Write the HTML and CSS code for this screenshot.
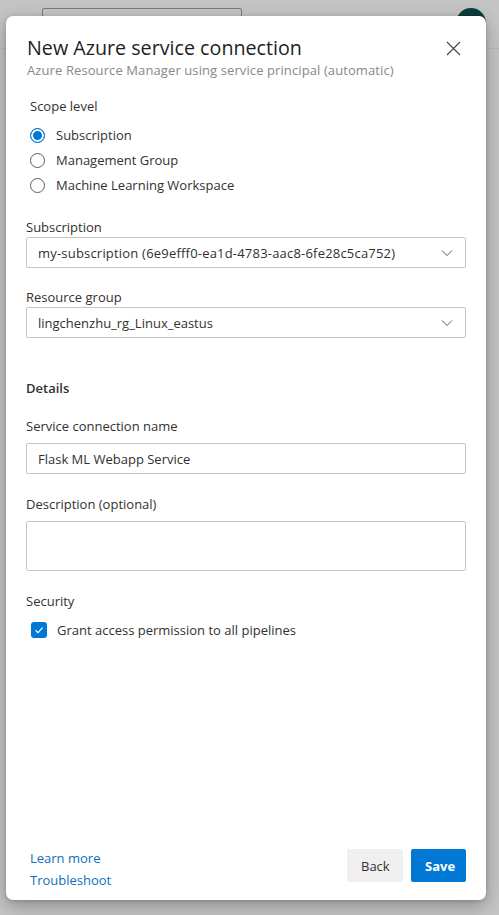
FILE: index.html
```html
<!DOCTYPE html>
<html>
<head>
<meta charset="utf-8">
<link rel="stylesheet" href="styles.css">
</head>
<body>
<div class="page">
  <div class="bg-search"></div>
  <div class="bg-avatar"></div>
  <div class="bg-line bg-line-top"></div>
  <div class="dialog">
    <div class="header">
      <div class="titles">
        <div class="title">New Azure service connection</div>
        <div class="subtitle">Azure Resource Manager using service principal (automatic)</div>
      </div>
      <button class="close" aria-label="Close">
        <svg width="15" height="15" viewBox="0 0 15 15"><path d="M1 1L14 14M14 1L1 14" stroke="#444" stroke-width="1.1" fill="none"/></svg>
      </button>
    </div>
    <div class="body">
      <div class="scope-label">Scope level</div>
      <div class="radios">
        <label class="radio checked"><span class="dot"></span><span>Subscription</span></label>
        <label class="radio"><span class="dot"></span><span>Management Group</span></label>
        <label class="radio"><span class="dot"></span><span>Machine Learning Workspace</span></label>
      </div>

      <div class="field f-sub">
        <div class="label">Subscription</div>
        <div class="select"><span class="wide">my-subscription (6e9efff0-ea1d-4783-aac8-6fe28c5ca752)</span>
          <svg width="12" height="8" viewBox="0 0 12 8"><path d="M1 1.5L6 6.5L11 1.5" stroke="#555" stroke-width="1" fill="none"/></svg></div>
      </div>
      <div class="field f-rg">
        <div class="label">Resource group</div>
        <div class="select"><span>lingchenzhu_rg_Linux_eastus</span>
          <svg width="12" height="8" viewBox="0 0 12 8"><path d="M1 1.5L6 6.5L11 1.5" stroke="#555" stroke-width="1" fill="none"/></svg></div>
      </div>

      <div class="section">Details</div>
      <div class="field f-name">
        <div class="label">Service connection name</div>
        <div class="input">Flask ML Webapp Service</div>
      </div>
      <div class="field f-desc">
        <div class="label">Description (optional)</div>
        <div class="textarea"></div>
      </div>
      <div class="field f-sec">
        <div class="label">Security</div>
        <label class="check"><span class="box"><svg width="12" height="12" viewBox="0 0 12 12"><path d="M2.5 6.2L5 8.6L9.6 3.6" stroke="#fff" stroke-width="1.2" fill="none"/></svg></span><span>Grant access permission to all pipelines</span></label>
      </div>
    </div>
    <div class="footer">
      <div class="links">
        <a href="#">Learn more</a>
        <a href="#">Troubleshoot</a>
      </div>
      <div class="buttons">
        <button class="btn btn-back">Back</button>
        <button class="btn btn-save">Save</button>
      </div>
    </div>
  </div>
</div>
</body>
</html>
```
FILE: styles.css
```css
* { box-sizing: border-box; }
html, body { margin: 0; padding: 0; }
body {
  width: 499px; height: 915px; overflow: hidden;
  background: #c4c4c4;
  font-family: "Open Sans", "Noto Sans", sans-serif;
  color: #323130;
}
.page { position: relative; width: 499px; height: 915px; padding: 16px 13px 15px 6px; }
.bg-search { position: absolute; left: 42px; top: 8px; width: 200px; height: 20px; border: 1px solid #7a7a7a; border-radius: 2px; }
.bg-avatar { position: absolute; left: 456px; top: 8px; width: 30px; height: 30px; border-radius: 50%; background: #0d3c3c; }
.bg-line { position: absolute; left: 0; right: 0; height: 1px; background: #b8b8b8; }
.bg-line-top { top: 48px; }

.dialog {
  position: relative;
  width: 480px; height: 884px;
  background: #fff; border-radius: 7px;
  box-shadow: 0 6px 18px rgba(0,0,0,0.28), 0 1px 4px rgba(0,0,0,0.15);
  display: flex; flex-direction: column;
  padding: 19px 20px 11px 20px;
}
.header { display: flex; justify-content: space-between; align-items: flex-start; }
.title { font-size: 19.7px; line-height: 26px; color: #201f1e; margin-left: 1px; }
.subtitle { font-size: 13px; letter-spacing: 0.1px; line-height: 18px; color: #8a8886; margin-left: 1px; }
.close { background: none; border: 0; padding: 0; margin: 6px 5px 0 0; width: 15px; height: 15px; }

.body { flex: 1; padding-top: 18px; }
.scope-label { font-size: 13px; line-height: 18px; margin-left: 4px; }
.radios { display: flex; flex-direction: column; gap: 7px; margin-top: 11px; margin-left: 4px; }
.radio { display: flex; align-items: center; gap: 11px; font-size: 13px; line-height: 18px; }
.dot { width: 15px; height: 15px; border-radius: 50%; border: 1px solid #605e5c; flex: none; background: #fff; }
.radio.checked .dot { border: 1.5px solid #0078d4; box-shadow: inset 0 0 0 2px #fff; background: #0078d4; }

.field { margin-top: 20px; }
.f-sub { margin-top: 24px; }
.label { font-size: 13px; line-height: 18px; margin-bottom: 1px; }
.select, .input {
  height: 31px; border: 1px solid #c8c6c4; border-radius: 2px;
  display: flex; align-items: center; justify-content: space-between;
  padding: 0 12px 0 11px; font-size: 13px; color: #323130;
}
.wide { letter-spacing: 0.2px; }
.select svg { flex: none; }
.f-rg { margin-top: 20px; }
.section { font-size: 13px; font-weight: 600; line-height: 18px; margin-top: 41px; }
.f-name { margin-top: 20px; }
.f-name .label { margin-bottom: 8px; }
.f-desc { margin-top: 21px; }
.f-desc .label { margin-bottom: 8px; }
.textarea { height: 50px; border: 1px solid #c8c6c4; border-radius: 2px; }
.f-sec { margin-top: 21px; }
.check { display: flex; align-items: center; gap: 10px; font-size: 13px; margin-top: 11px; margin-left: 5px; }
.box { width: 16px; height: 16px; border-radius: 3px; background: #0078d4; display: flex; align-items: center; justify-content: center; flex: none; }

.footer { display: flex; justify-content: space-between; align-items: flex-end; }
.links { display: flex; flex-direction: column; gap: 4px; margin-left: 4px; }
.links a { color: #106ebe; text-decoration: none; font-size: 13px; line-height: 18px; }
.buttons { display: flex; gap: 8px; margin-bottom: 7px; }
.btn { height: 33px; border: 0; border-radius: 2px; font-family: inherit; font-size: 13px; padding: 0 14px; }
.btn-back { background: #f0f0f0; color: #323130; width: 56px; }
.btn-save { background: #0078d4; color: #fff; font-weight: 700; width: 55px; }
```
